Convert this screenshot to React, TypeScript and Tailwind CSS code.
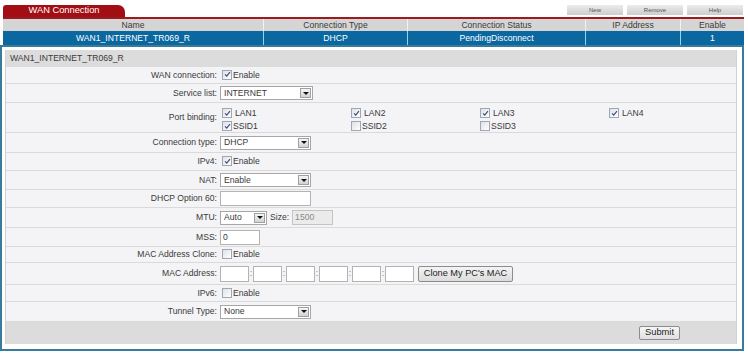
import type { ReactNode } from 'react';
import { clsx } from 'clsx';

function Check({ on }: { on?: boolean }) {
  return (
    <span className="ml-[2px] inline-flex h-[10px] w-[10px] shrink-0 items-center justify-center border border-[#9ca7b8] bg-gradient-to-br from-[#dfe1e6] to-white">
      {on && (
        <svg viewBox="0 0 8 8" className="h-[7px] w-[7px]">
          <path d="M1.2 3.8 L3.1 5.8 L6.8 1.4" fill="none" stroke="#3d4b78" strokeWidth="1.3" />
        </svg>
      )}
    </span>
  );
}

function Select({ value, className }: { value: string; className: string }) {
  return (
    <div className={clsx('flex h-[14px] items-center justify-between border border-[#a7a7a7] bg-white pl-[3px] pr-[1px]', className)}>
      <span>{value}</span>
      <span className="flex h-[10px] w-[11px] items-center justify-center border border-[#a0a0a0] bg-gradient-to-b from-[#f6f6f6] to-[#d2d2d2]">
        <span className="h-0 w-0 border-x-[3px] border-t-[3px] border-x-transparent border-t-[#111]" />
      </span>
    </div>
  );
}

function Input({ className, value, disabled }: { className: string; value?: string; disabled?: boolean }) {
  return (
    <div
      className={clsx(
        'flex items-center border pl-[2px]',
        disabled ? 'border-[#c4c4c4] bg-[#ebebeb] text-[#8a8a8a]' : 'border-[#b3b3b3] bg-white',
        className,
      )}
    >
      {value}
    </div>
  );
}

function Row({ label, h, children }: { label: string; h: string; children: ReactNode }) {
  return (
    <div className={clsx('flex items-center border-b border-[#dadada] bg-[#f4f4f6]', h)}>
      <div className="w-[211px] shrink-0 text-right">{label}</div>
      <div className="ml-[3px] flex items-center">{children}</div>
    </div>
  );
}

const cols = [
  { name: 'Name', value: 'WAN1_INTERNET_TR069_R', w: 'w-[260px]' },
  { name: 'Connection Type', value: 'DHCP', w: 'w-[144px]' },
  { name: 'Connection Status', value: 'PendingDisconnect', w: 'w-[178px]' },
  { name: 'IP Address', value: '', w: 'w-[95px]' },
  { name: 'Enable', value: '1', w: 'w-[64px]' },
];

const ports = [
  { label: 'LAN1', on: true },
  { label: 'LAN2', on: true },
  { label: 'LAN3', on: true },
  { label: 'LAN4', on: true },
  { label: 'SSID1', on: true },
  { label: 'SSID2', on: false },
  { label: 'SSID3', on: false },
];

export default function App() {
  return (
    <div className="h-[353px] w-[748px] overflow-hidden bg-white font-['Liberation_Sans',Arial,sans-serif] text-[8.6px] text-[#3a3a3a]">
      <div className="flex h-[17px] items-end">
        <div className="ml-[3px] flex h-[12px] w-[122px] items-center justify-center rounded-tl-[3px] rounded-tr-[7px] bg-[#a30e14] text-[9.3px] text-white">
          WAN Connection
        </div>
        <div className="ml-auto mr-[5px] flex gap-[4px] self-start pt-[5px]">
          {['New', 'Remove', 'Help'].map((b) => (
            <div
              key={b}
              className="flex h-[10px] w-[56px] items-center justify-center bg-gradient-to-b from-[#ececec] to-[#cdcdcd] text-[6px] text-[#555]"
            >
              {b}
            </div>
          ))}
        </div>
      </div>
      <div className="ml-[3px] h-[2px] w-[741px] bg-[#9c1b1f]" />

      <div className="ml-[3px] w-[741px]">
        <div className="flex h-[12px] bg-[#d5d5d5]">
          {cols.map((c, i) => (
            <div key={c.name} className={clsx('flex items-center justify-center', c.w, i > 0 && 'border-l border-[#f2f2f2]')}>
              {c.name}
            </div>
          ))}
        </div>
        <div className="flex h-[14px] bg-[#0a67a0] text-white">
          {cols.map((c, i) => (
            <div key={c.name} className={clsx('flex items-center justify-center', c.w, i > 0 && 'border-l border-[#9fd0ea]')}>
              {c.value}
            </div>
          ))}
        </div>
      </div>

      <div className="h-[306px] w-[744px] border-2 border-[#3a7b9c] pb-[5px] pl-[3px] pr-[5px] pt-[3px]">
        <div className="border-x border-[#d2d2d2]">
          <div className="flex h-[17px] items-center bg-[#dcdcdc] pl-[4px]">WAN1_INTERNET_TR069_R</div>

          <Row label="WAN connection:" h="h-[17px]">
            <Check on />
            <span className="ml-[1px]">Enable</span>
          </Row>
          <Row label="Service list:" h="h-[19px]">
            <Select value="INTERNET" className="w-[93px]" />
          </Row>
          <Row label="Port binding:" h="h-[30px]">
            <div className="grid grid-cols-[129px_129px_129px_129px] pt-[4px]">
              {ports.map((p) => (
                <div key={p.label} className="flex h-[13px] items-center">
                  <Check on={p.on} />
                  <span className={p.label.startsWith('LAN') ? 'ml-[3px]' : 'ml-[1px]'}>{p.label}</span>
                </div>
              ))}
            </div>
          </Row>
          <Row label="Connection type:" h="h-[20px]">
            <Select value="DHCP" className="w-[91px]" />
          </Row>
          <Row label="IPv4:" h="h-[18px]">
            <Check on />
            <span className="ml-[1px]">Enable</span>
          </Row>
          <Row label="NAT:" h="h-[19px]">
            <Select value="Enable" className="w-[91px]" />
          </Row>
          <Row label="DHCP Option 60:" h="h-[18px]">
            <Input className="h-[15px] w-[91px]" />
          </Row>
          <Row label="MTU:" h="h-[20px]">
            <Select value="Auto" className="w-[47px]" />
            <span className="ml-[3px]">Size:</span>
            <Input className="ml-[3px] h-[15px] w-[41px]" value="1500" disabled />
          </Row>
          <Row label="MSS:" h="h-[19px]">
            <Input className="h-[15px] w-[40px]" value="0" />
          </Row>
          <Row label="MAC Address Clone:" h="h-[16px]">
            <Check />
            <span className="ml-[1px]">Enable</span>
          </Row>
          <Row label="MAC Address:" h="h-[22px]">
            {[0, 1, 2, 3, 4, 5].map((i) => (
              <div key={i} className="flex items-center">
                {i > 0 && <span className="w-[4px] text-center text-[#888]">:</span>}
                <Input className="h-[16px] w-[29px]" />
              </div>
            ))}
            <div className="ml-[4px] flex h-[16px] w-[95px] items-center justify-center rounded-[2px] border border-[#8c8c8c] bg-gradient-to-b from-[#f4f4f4] to-[#dcdcdc] text-[9.2px] text-[#222]">
              Clone My PC's MAC
            </div>
          </Row>
          <Row label="IPv6:" h="h-[17px]">
            <Check />
            <span className="ml-[1px]">Enable</span>
          </Row>
          <Row label="Tunnel Type:" h="h-[20px]">
            <Select value="None" className="w-[91px]" />
          </Row>

          <div className="flex h-[22px] items-center justify-end bg-[#dcdcdc] pr-[56px]">
            <div className="flex h-[14px] w-[41px] items-center justify-center rounded-[2px] border border-[#8c8c8c] bg-gradient-to-b from-[#f6f6f6] to-[#e0e0e0] text-[9.3px] text-[#222]">
              Submit
            </div>
          </div>
        </div>
      </div>
    </div>
  );
}
